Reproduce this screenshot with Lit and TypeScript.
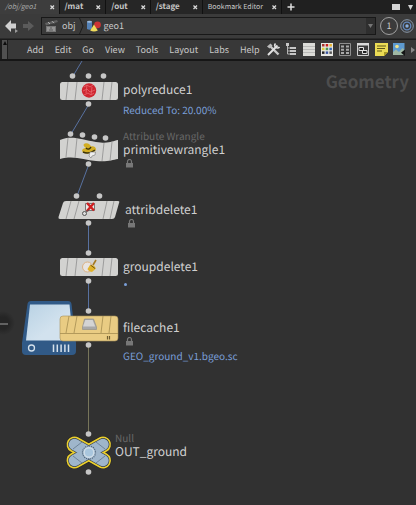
import { LitElement, html, svg, css } from "lit";
import { customElement } from "lit/decorators.js";
import { classMap } from "lit/directives/class-map.js";

interface Tab { label: string; kind?: "active" | "plain"; }
interface GraphLabel { x: number; y: number; name: string; caption?: string; locked?: boolean; info?: string; dot?: boolean; }

const TABS: Tab[] = [
  { label: "/obj/geo1", kind: "active" },
  { label: "/mat" },
  { label: "/out" },
  { label: "/stage" },
  { label: "Bookmark Editor", kind: "plain" },
];
const MENUS = ["Add", "Edit", "Go", "View", "Tools", "Layout", "Labs", "Help"];

/* Graph positions are relative to the top left of the network canvas. */
const LABELS: GraphLabel[] = [
  { x: 123, y: 22, name: "polyreduce1", info: "Reduced To: 20.00%" },
  { x: 123, y: 68, caption: "Attribute Wrangle", name: "primitivewrangle1", locked: true },
  { x: 125, y: 142, name: "attribdelete1", locked: true },
  { x: 123, y: 199, name: "groupdelete1", dot: true },
  { x: 123, y: 260, name: "filecache1", locked: true, info: "GEO_ground_v1.bgeo.sc" },
  { x: 115, y: 370, caption: "Null", name: "OUT_ground" },
];
const PORTS = [
  [73, 15], [89, 15], [104, 15], [89, 43],
  [71, 73], [83, 74], [95, 76], [106, 77], [89, 103],
  [77, 135], [100, 135], [89, 162],
  [89, 192], [89, 220],
  [89, 250], [89, 284],
  [89, 373], [89, 411],
];
const WIRES = [
  "M82 0 73 15", "M89 43 71 73", "M89 103 77 135", "M88.5 162V192", "M88.5 220V250",
];

const cross = svg`<path d="M.5 .5 4 4M4 .5 .5 4" stroke="#d8d8d8" stroke-width="1.3"/>`;

const TOOLS = [
  { name: "Tools", art: svg`<path d="M3 3 11.5 11.500" stroke="#c9c9c9" stroke-width="2.4"/><path d="M10.500 2.5 1 12" stroke="#e2e2e2" stroke-width="2"/><path d="M8.500 .5a2.6 2.6 0 0 0 4 3.500" fill="none" stroke="#e2e2e2" stroke-width="1.6"/><path d="M0 3.5 3.5.5l2 2L2.5 5.500z" fill="#bbb"/>` },
  { name: "Tree view", art: svg`<path d="M1 0h3v3H1zM5 4h6v2H5zM5 7h6v2H5zM5 10h6v2H5z" fill="#c6c6c6"/><path d="M2.5 3v8H5M2.5 5H5M2.5 8H5" fill="none" stroke="#b5b5b5"/>` },
  { name: "List view", art: svg`<path d="M0 0h12v13H0z" fill="#dcdcd8"/><path d="M0 3.5h12M0 6.5h12M0 9.5h12" stroke="#aaa" stroke-width=".7"/>` },
  { name: "Colour palette", art: svg`<path d="M0 0h12v13H0z" fill="#e8e8e4"/><path d="M1 1h2.5v2.5H1z" fill="#a8342e"/><path d="M4.7 1h2.5v2.5H4.7z" fill="#c8201c"/><path d="M8.4 1h2.5v2.5H8.4z" fill="#e8b42d"/><path d="M1 4.7h2.5v2.5H1z" fill="#e2cf3d"/><path d="M4.7 4.7h2.5v2.5H4.7z" fill="#4a9856"/><path d="M8.4 4.7h2.5v2.5H8.4z" fill="#3566b0"/><path d="M1 8.4h2.5v2.5H1z" fill="#222"/><path d="M4.7 8.4h2.5v2.5H4.7z" fill="#3a55a0"/><path d="M8.4 8.4h2.5v2.5H8.4z" fill="#555"/>` },
  { name: "Network boxes", art: svg`<path d="M.5.5h11v12H.5z" fill="#333" stroke="#8f8f8f"/><path d="M2 2.500h3v2H2zM7 2.500h3v2H7zM2 5.700h3v2H2zM7 5.700h3v2H7zM2 9h3v2H2zM7 9h3v2H7z" fill="#a9a9a9"/>` },
  { name: "Overview", art: svg`<path d="M.5.5h11v12H.5z" fill="#3a3a3a" stroke="#cfcfcf"/><path d="M0 0h12v2.500H0z" fill="#d8d8d8"/><path d="M2 4.500h4.5v3H2zM5.5 7.5H10V10.500H5.5z" fill="#222" stroke="#e2e2e2"/>` },
  { name: "Sticky note", art: svg`<path d="M0 0h13v9L9 13H0z" fill="#ecdc55"/><path d="M9 13V9h4z" fill="#a99a26"/><path d="M2 3h9M2 5.5h8M2 8h5" stroke="#5f561b" stroke-width="1"/>` },
  { name: "Background image", art: svg`<path d="M0 0h11.500v12H0z" fill="#5d9ad0"/><circle cx="4" cy="3.5" r="1.8" fill="#f0e28a"/><path d="M0 12V9l3-2.5L6 9l3.5-4L11.500 7v5z" fill="#9fb8a4"/><path d="M12 6.5V13L8 9.800z" fill="#151515"/>` },
];

@customElement("app-root")
export class AppRoot extends LitElement {
  static styles = css`
    :host {
      display: flex; flex-direction: column; min-height: 100vh; overflow: hidden;
      background: #313131; color: #c8c8c8;
      font-family: "Noto Sans CJK SC", "Noto Sans", sans-serif; font-size: 9px;
      text-rendering: geometricPrecision;
    }
    * { box-sizing: border-box; }
    svg { display: block; flex: none; }
    button { appearance: none; border: 0; margin: 0; padding: 0; background: none; color: inherit; font: inherit; text-rendering: inherit; white-space: nowrap; }
    .tabs { display: flex; height: 14px; background: #202020; font-size: 8px; line-height: 14px; }
    .tab { display: flex; align-items: center; gap: 13px; padding: 0 4px 0 5px; border-right: 1px solid #111; background: #262626; font-weight: 700; }
    .tab.active { background: #3d3d3d; color: #a8a8a8; font-size: 7px; font-style: italic; font-weight: 400; }
    .tab.plain { background: #242424; font-size: 7px; font-weight: 400; gap: 9px; }
    .new { padding: 0 5px; }
    .window { display: flex; align-items: center; gap: 8px; margin-left: auto; padding-right: 3px; }
    .path { display: flex; align-items: center; height: 25px; padding: 0 2px 0 5px; background: #3b3b3b; border-bottom: 1px solid #2a2a2a; }
    .crumbs { display: flex; align-items: center; flex: 1; height: 18px; margin: 0 4px 0 6px; border: 1px solid #181818; background: #3a3a3a; line-height: 16px; }
    .crumb { display: flex; align-items: center; gap: 3px; padding: 0 3px; }
    .drop { display: flex; align-items: center; justify-content: center; width: 9px; height: 16px; margin-left: auto; background: #2e2e2e; }
    .link { width: 18px; height: 18px; border: 1px solid #a0a0a0; border-radius: 50%; line-height: 16px; text-align: center; margin-right: 2px; }
    .menubar { display: flex; align-items: center; height: 22px; padding-right: 1px; background: #383838; border-top: 1px solid #1b1b1b; border-bottom: 2px solid #161616; }
    .grip { display: flex; justify-content: center; width: 8px; height: 100%; padding-top: 1px; border: solid #1c1c1c; border-width: 0 1px 0 2px; background: #505050; }
    .menus { display: flex; gap: 11px; margin-left: 19px; line-height: 18px; }
    .tools { display: flex; gap: 5px; margin-left: auto; align-items: center; }
    .canvas { position: relative; flex: 1; min-height: 420px; overflow: hidden; background: #313131; }
    .graph { position: absolute; inset: 0; width: 100%; height: 100%; }
    .context { margin: 0; padding: 8px 7px 0 0; text-align: right; font-size: 17px; line-height: 24px; font-weight: 700; color: #4d4d4d; }
    .label { position: absolute; white-space: nowrap; font-size: 10px; }
    .caption { line-height: 14px; color: #686868; }
    .name { font-size: 12px; line-height: 14px; color: #d0d0d0; }
    .lock { height: 13px; padding: 2px 0 0 3px; }
    .info { line-height: 16px; color: #7a9fd8; }
    .name + .info { margin-top: 5px; }
    .dot { width: 3px; height: 3px; margin: 9px 0 0 1px; border-radius: 50%; background: #7a9fd8; }
  `;

  private slats(y: number, h: number) {
    return svg`<path d="M68 ${y}l-2 ${h}M77 ${y}l-2 ${h}M104 ${y}l-2 ${h}M112 ${y}l-2 ${h}" stroke="#8e8e8e" stroke-width=".8" fill="none"/>`;
  }

  private graph() {
    return html`<svg class="graph" aria-hidden="true">
      <defs>
        <radialGradient id="knob"><stop offset=".5" stop-color="#252525"/><stop offset="1" stop-color="#313131"/></radialGradient>
        <linearGradient id="glass" x2="1" y2="1"><stop stop-color="#b9d2e4"/><stop offset=".6" stop-color="#d2e2ee"/></linearGradient>
      </defs>
      <circle cx="3" cy="262" r="12" fill="url(#knob)"/><path d="M0 263h8" stroke="#626262" stroke-width="2"/>
      ${WIRES.map((d) => svg`<path d=${d} stroke="#5871a0" fill="none"/>`)}
      <path d="M88.500 284V373" stroke="#77755a"/>

      <rect x="60" y="21" width="58" height="18" rx="2.500" fill="#d2d2d0"/>${this.slats(21, 18)}
      <circle cx="89" cy="29.500" r="7.200" fill="#cf2630"/>
      <path d="M84 26l3-2 3 2 3-2M83 30l4-2 3 3 5-2M84 34l4-2 3 2 3-2M87 24l-1 8M92 26l-1 8" stroke="#e8686e" stroke-width=".8" fill="none"/>

      <path d="M60 79C72 74 82 79 96 81S112 80 118 79V98C112 99 108 101 96 100S74 94 60 98Z" fill="#d2d2d0"/>
      <path d="M68 77l-2 19M77 77l-2 20M104 82l-2 18M112 81l-2 19" stroke="#8e8e8e" stroke-width=".8" fill="none"/>
      <path d="M82 90c0-2 2-3 4-3-3-2-3-4-1-4.500 3-1 5 1 6 3 3-1 5 1 5 3-1 4-12 6-14 1.500z" fill="#d2ad22"/>
      <path d="M83 91c4 2 8 1 12-2M86 87c2 2 4 1 5-1" stroke="#3c330c" stroke-width="1.400" fill="none"/>
      <path d="M90 91l5.500 0-.5 3-3 1-1 2-2-2z" fill="#eee" stroke="#777" stroke-width=".6"/>

      <path d="M66 140H118Q120 140 119 142L115 156Q114.500 158 112 158H60Q58 158 58.500 156L63 142Q63.500 140 66 140Z" fill="#d2d2d0"/>
      <path d="M71 140l-5 18M79 140l-5 18M107 140l-4 18M114 140l-4 18" stroke="#8e8e8e" stroke-width=".8" fill="none"/>
      <path d="M85.500 142.500h9v7h-9z" fill="#e8e8e8" stroke="#777"/>
      <path d="M87 142l7 7.500M94 142l-7 8" stroke="#cf1f21" stroke-width="2.400"/>
      <circle cx="84.500" cy="152.500" r="2" fill="#ddd" stroke="#555"/><path d="M86 151l3-2" stroke="#555"/>

      <rect x="60" y="197" width="58" height="18" rx="2.500" fill="#d2d2d0"/>${this.slats(197, 18)}
      <circle cx="87.500" cy="206" r="5" fill="#e8e4e1" stroke="#dbb285"/>
      <path d="M96 199l-3 5" stroke="#a57a20" stroke-width="1.600"/><path d="M90 204l4 .5 2 3-4 3.500q-4-1-4.500-3z" fill="#e0b229"/><path d="M90.500 204l4.500 3.500" stroke="#6d5311"/>

      <path d="M31 240H68Q71 240 71.500 243L76 282V290Q76 294 72 294H26Q22 294 22 290V282L27.500 243Q28 240 31 240Z" fill="#315a87"/>
      <path d="M30 243.500H69.500L73 279.500H26Z" fill="url(#glass)"/>
      <circle cx="31.500" cy="287" r="3" fill="none" stroke="#d5e1ec" stroke-width="1.300"/>
      <path d="M53.500 283.500v7.500M57.300 283.500v7.500M61.100 283.500v7.500M64.900 283.500v7.500M68.500 283.500v7.500" stroke="#d5e1ec" stroke-width="1.500"/>

      <rect x="60" y="255" width="58" height="25" rx="3" fill="#e9cc83" stroke="#a99158" stroke-width=".6"/>
      <path d="M60 272.500h58M69 255l-3 17M77 255l-3 17M103 255l-2 17M111 255l-2 17" stroke="#a58d50" stroke-width=".8" fill="none"/>
      <path d="M84.500 258h9l3 8v2.500h-14V266z" fill="#a8a8a8" stroke="#8a8a8a" stroke-width=".6"/><path d="M85.300 259h7.400l2.500 6.500H83z" fill="#d4d4d4"/>
      <path d="M107.500 275v3.500M109.500 275v3.500" stroke="#6f5d2f" stroke-width="1.200"/>

      <g stroke-linecap="round" fill="none">
        <path d="M74.500 383.500 103 399.500M103 383.500 74.500 399.500" stroke="#242424" stroke-width="17"/>
        <path d="M74.500 383.500 103 399.500M103 383.500 74.500 399.500" stroke="#ecd02e" stroke-width="16"/>
        <path d="M74.500 383.500 103 399.500M103 383.500 74.500 399.500" stroke="#343d48" stroke-width="12.800"/>
        <path d="M74.500 383.500 103 399.500M103 383.500 74.500 399.500" stroke="#9fb6cb" stroke-width="11.500"/>
      </g>
      <path d="M73 388l9-7M96 381l9 7M73 395l9 7M96 402l9-7" stroke="#62778c" stroke-width=".8"/>
      <circle cx="89" cy="391.500" r="6.500" fill="#9fb6cb" stroke="#4f6478" stroke-width="1.200" stroke-dasharray="1 1"/>
      <circle cx="89" cy="391.500" r="4.800" fill="#a9c6dd" stroke="#cfdde8" stroke-width="1.400"/>
      ${PORTS.map(([x, y]) => svg`<circle cx=${x - 0.5} cy=${y} r="2.800" fill="#c6c6c6"/>`)}
    </svg>`;
  }

  render() {
    return html`
      <nav class="tabs" aria-label="Panes">
        ${TABS.map((t) => html`<button class=${classMap({ tab: true, active: t.kind === "active", plain: t.kind === "plain" })}>
          ${t.label}<svg width="5" height="5">${cross}</svg></button>`)}
        <button class="new" aria-label="New tab"><svg width="8" height="8"><path d="M4 .5v7M.5 4h7" stroke="#ddd" stroke-width="1.500"/></svg></button>
        <span class="window">
          <button aria-label="Maximize"><svg width="8" height="6"><path d="M0 0h8v6H0z" fill="#d4d4d4"/></svg></button>
          <button aria-label="Pane menu"><svg width="5" height="5"><path d="M0 0h5L2.500 5z" fill="#d4d4d4"/></svg></button>
        </span>
      </nav>
      <div class="path">
        <button aria-label="Back"><svg width="15" height="14"><path d="M0 7 6 1v3.500h5v5H6V13z" fill="#d0d0d0"/><path d="M10 10l3 2-3 2z" fill="#999"/></svg></button>
        <button aria-label="Forward"><svg width="15" height="14"><path d="M14 7 8 2v3H3v4h5v3z" fill="#5b5b5b"/></svg></button>
        <div class="crumbs">
          <button class="crumb"><svg width="14" height="14"><path d="M1 7h10v6H1z" fill="#777"/><path d="M1 6.500 0 4l12-3 1 2z" fill="#606060"/><path d="M3 3.200l2 1.800M7 2.200l2 2M2 9h3M7 9h3M2 11h2M8 11h2" stroke="#b4b4b4"/></svg>obj</button>
          <svg width="5" height="16"><path d="M.5 0 4 8 .5 16" fill="none" stroke="#1d1d1d"/></svg>
          <button class="crumb"><svg width="14" height="12"><path d="M0 2q2.500-2 5 0v7q-2.500 1.500-5 0z" fill="#5481b6"/><ellipse cx="2.500" cy="1.800" rx="2.500" ry="1" fill="#9dbada"/><circle cx="10.500" cy="4.800" r="3.400" fill="#cc3434"/><path d="M7 4.500 10.800 10.500Q7 12.500 3.200 10.500z" fill="#f0dc5c"/></svg>geo1</button>
          <button class="drop" aria-label="Path history"><svg width="5" height="4"><path d="M0 0h5L2.500 4z" fill="#777"/></svg></button>
        </div>
        <button class="link">1</button>
        <button aria-label="Follow selection"><svg width="14" height="14" fill="none"><circle cx="7" cy="7" r="6.300" stroke="#8b99aa"/><circle cx="7" cy="7" r="3.800" stroke="#6288bd" stroke-width="1.300"/><circle cx="7" cy="7" r="1.700" fill="#87aee0"/></svg></button>
      </div>
      <div class="menubar">
        <span class="grip"><svg width="4" height="4"><path d="M0 4 2 0l2 4z" fill="#0c0c0c"/></svg></span>
        <nav class="menus">${MENUS.map((m) => html`<button>${m}</button>`)}</nav>
        <div class="tools">
          ${TOOLS.map((t) => html`<button aria-label=${t.name}><svg width="13" height="13">${t.art}</svg></button>`)}
          <button aria-label="More"><svg width="4" height="6"><path d="M0 0 4 3 0 6z" fill="#888"/></svg></button>
        </div>
      </div>
      <main class="canvas">
        <h1 class="context">Geometry</h1>
        ${this.graph()}
        ${LABELS.map((l) => html`<div class="label" style="left:${l.x}px;top:${l.y}px">
          ${l.caption ? html`<div class="caption">${l.caption}</div>` : ""}
          <div class="name">${l.name}</div>
          ${l.locked ? html`<div class="lock"><svg width="7" height="9"><path d="M1.500 4V2.500a2 2 0 0 1 4 0V4" fill="none" stroke="#777" stroke-width="1.200"/><path d="M0 4h7v4.500H0z" fill="#777"/></svg></div>` : ""}
          ${l.info ? html`<div class="info">${l.info}</div>` : ""}
          ${l.dot ? html`<div class="dot"></div>` : ""}
        </div>`)}
      </main>`;
  }
}
